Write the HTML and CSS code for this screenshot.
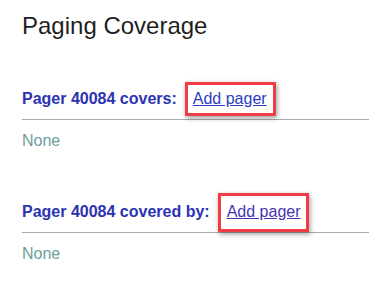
FILE: index.html
```html
<!DOCTYPE html>
<html lang="en">
<head>
  <meta charset="UTF-8" />
  <title>Paging Coverage</title>
  <meta name="viewport" content="width=device-width, initial-scale=1.0" />
  <link rel="stylesheet" href="styles.css">
</head>
<body>
  <div class="page">
    <h1>Paging Coverage</h1>

    <div class="section">
      <div class="head">
        <span class="label">Pager 40084 covers:</span>
        <span class="mark"><a href="#" class="add">Add pager</a></span>
      </div>
      <div class="empty">None</div>
    </div>

    <div class="section">
      <div class="head">
        <span class="label">Pager 40084 covered by:</span>
        <span class="mark tall"><a href="#" class="add visited">Add pager</a></span>
      </div>
      <div class="empty">None</div>
    </div>
  </div>
</body>
</html>
```

FILE: styles.css
```css
body {
  margin: 0;
  font-family: "Liberation Sans", Arial, sans-serif;
  background-color: #fff;
  color: #222;
}

.page {
  padding: 12px 0 0 22px;
}

h1 {
  font-size: 24px;
  font-weight: normal;
  line-height: 28px;
  margin: 0 0 49px 0;
  color: #1f1f1f;
}

.section + .section {
  margin-top: 51px;
}

.head {
  display: flex;
  align-items: baseline;
  border-bottom: 1px solid #aaa;
  padding-bottom: 10px;
  font-size: 16px;
  line-height: 20px;
}

.label {
  font-weight: bold;
  color: #2b33b3;
}

.mark {
  display: block;
  margin: -7px 0 -7px 8px;
  padding: 4px 6px 4px 5px;
  border: 3px solid #f23c45;
  box-shadow: 1px 2px 5px rgba(0, 0, 0, 0.4);
}

.mark.tall {
  margin: -9px 0 -10px 8px;
  padding: 6px 5px 7px 6px;
}

.add {
  color: #2a3dc2;
  text-decoration: underline;
}

.add.visited {
  color: #4433b0;
}

.empty {
  margin-top: 11px;
  font-size: 16px;
  line-height: 20px;
  color: #6c9e9e;
}
```
